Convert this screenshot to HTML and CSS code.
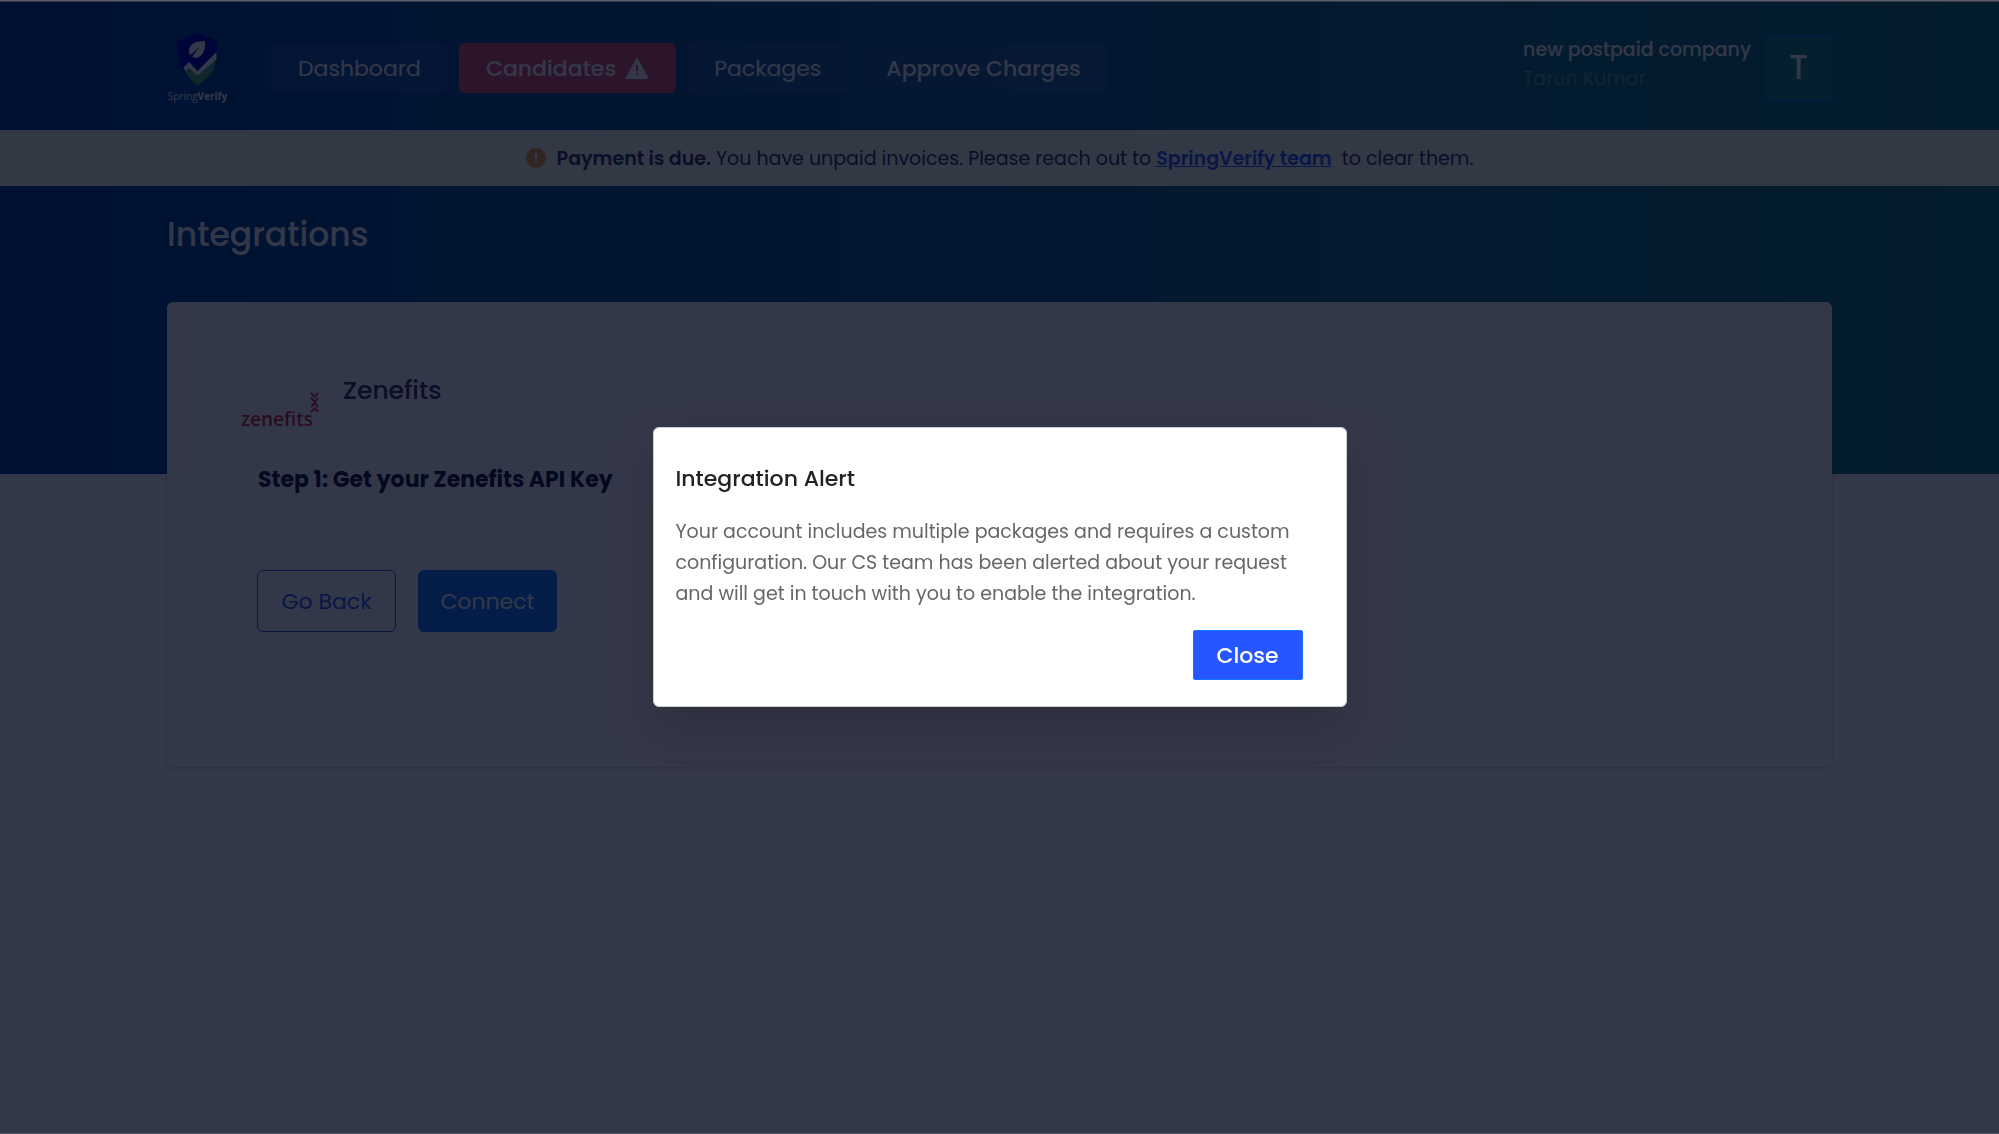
FILE: index.html
```html
<!DOCTYPE html>
<html lang="en">
<head>
  <meta charset="utf-8">
  <meta name="viewport" content="width=device-width, initial-scale=1">
  <title>Integrations - SpringVerify</title>
  <link rel="stylesheet" href="styles.css">
</head>
<body>
  <div class="page">
    <div class="hero">
      <header class="navbar">
        <a href="#" class="brand">
          <svg class="brand-mark" viewBox="0 0 41 52" aria-hidden="true">
            <path fill="#0000b4" d="M20.500 0L40.500 8L39 30Q37 40 20.500 52Q4 40 2 30L0 8Z"/>
            <path fill="#49a86a" d="M7 37L12 34L20.500 43L39 25Q38 34 36 38Q33 43 20.500 53Q12 46 7 37Z"/>
            <path fill="#fff" d="M6 35L12 29L20.500 38L39.500 19V26L20.500 43L12 35L9 38Z"/>
            <path fill="#fff" d="M28 8C17 8 12 12 12 18C12 20 12.500 21 13.500 22L22 14L15 24C23 27 29 20 28 8Z"/>
          </svg>
          <span class="brand-name">Spring<b>Verify</b></span>
        </a>
        <nav class="menu">
          <a href="#" class="menu-link">Dashboard</a>
          <a href="#" class="menu-link alert">Candidates
            <svg class="warning" viewBox="0 0 24 22" aria-hidden="true">
              <path fill="#fff" d="M12 0L24 22H0Z"/>
              <path fill="#dc4b69" d="M11 8H13V14H11ZM11 16H13V18H11Z"/>
            </svg>
          </a>
          <a href="#" class="menu-link">Packages</a>
          <a href="#" class="menu-link strong">Approve Charges</a>
        </nav>
        <div class="account">
          <div class="account-text">
            <div class="company">new postpaid company</div>
            <div class="person">Tarun Kumar</div>
          </div>
          <button type="button" class="avatar">T</button>
        </div>
      </header>

      <div class="notice">
        <svg class="notice-icon" viewBox="0 0 20 20" aria-hidden="true">
          <circle cx="10" cy="10" r="10" fill="#f2a03c"/>
          <path fill="#fff" d="M9 5H11V11H9ZM9 13H11V15H9Z"/>
        </svg>
        <p><b>Payment is due.</b> You have unpaid invoices. Please reach out to <a href="#">SpringVerify team</a>&nbsp; to clear them.</p>
      </div>

      <h1 class="title">Integrations</h1>
    </div>

    <main class="card">
      <div class="provider">
        <svg class="provider-logo" viewBox="0 0 78 48" aria-hidden="true">
          <text x="0" y="34" class="provider-word">zenefits</text>
          <path fill="none" stroke="#d8283c" stroke-width="2" d="M70 1L74 5L77 1M70 6L74 10L77 6M70 15L74 11L77 15M70 20L74 16L77 20"/>
        </svg>
        <h2>Zenefits</h2>
      </div>
      <h3 class="step">Step 1: Get your Zenefits API Key</h3>
      <div class="actions">
        <button type="button" class="btn outline">Go Back</button>
        <button type="button" class="btn">Connect</button>
      </div>
    </main>
  </div>

  <div class="overlay">
    <div class="modal" role="dialog" aria-modal="true" aria-labelledby="modal-title">
      <h2 id="modal-title">Integration Alert</h2>
      <p>Your account includes multiple packages and requires a custom configuration. Our CS team has been alerted about your request and will get in touch with you to enable the integration.</p>
      <button type="button" class="close">Close</button>
    </div>
  </div>
</body>
</html>
```
FILE: styles.css
```css
* {
  box-sizing: border-box;
}

body {
  margin: 0;
  background: #fff;
  font-family: Poppins, Inter, sans-serif;
  font-size: 19px;
  color: #32305a;
}

h1, h2, h3, p {
  margin: 0;
}

button {
  font-family: inherit;
  cursor: pointer;
}

.page {
  min-height: 100vh;
  border-top: 2px solid #fff;
}

/* header */
.hero {
  height: 472px;
  background: linear-gradient(to right, #003c96, #0f6487 60%, #147873);
}

.navbar {
  display: flex;
  align-items: center;
  height: 128px;
  padding: 4px 167px 0;
}

.brand {
  display: flex;
  flex-direction: column;
  align-items: center;
  gap: 4px;
  width: 61px;
  margin-right: 43px;
  color: #fff;
  text-decoration: none;
}

.brand-mark {
  width: 41px;
  height: 52px;
}

.brand-name {
  font-family: "Open Sans", sans-serif;
  font-size: 10px;
  line-height: 15px;
}

.menu {
  display: flex;
  gap: 11px;
}

.menu-link {
  display: flex;
  align-items: center;
  gap: 9px;
  height: 50px;
  padding: 0 27px;
  border-radius: 6px;
  background: rgba(60, 95, 180, 0.4);
  color: #fff;
  font-size: 22px;
  text-decoration: none;
}

.alert {
  background: #dc4b69;
  font-weight: 500;
}

.strong {
  font-weight: 500;
}

.warning {
  width: 24px;
  height: 22px;
}

.account {
  display: flex;
  align-items: center;
  gap: 14px;
  margin-left: auto;
}

.account-text {
  padding-bottom: 8px;
  line-height: 29px;
}

.company {
  color: #fff;
  font-weight: 500;
}

.person {
  color: #5a9ba5;
}

.avatar {
  width: 67px;
  height: 67px;
  border: 2px solid #0f6ec8;
  border-radius: 6px;
  background: #14827d;
  color: #fff;
  font-size: 33px;
  font-weight: 500;
}

.notice {
  display: flex;
  align-items: center;
  justify-content: center;
  gap: 11px;
  height: 56px;
  background: #fffff0;
}

.notice-icon {
  width: 20px;
  height: 20px;
}

.notice b, .notice a {
  font-weight: 600;
}

.notice a {
  color: #2b59ff;
}

.title {
  padding: 24px 167px;
  color: #fff;
  font-size: 33px;
  font-weight: 500;
  line-height: 50px;
}

/* card */
.card {
  min-height: 465px;
  margin: -172px 167px 0;
  padding: 71px 74px;
  border-radius: 6px;
  background: #fff;
  box-shadow: 0 1px 4px rgba(0, 0, 0, 0.2);
}

.provider {
  display: flex;
  gap: 24px;
  height: 56px;
}

.provider-logo {
  width: 78px;
  height: 48px;
  margin-top: 19px;
}

.provider-word {
  fill: #d8283c;
  font-family: "Open Sans", sans-serif;
  font-size: 19px;
  font-weight: 600;
}

.provider h2 {
  font-size: 25px;
  font-weight: 500;
  line-height: 36px;
}

.step {
  padding: 31px 17px 0;
  color: #0f1432;
  font-size: 22px;
  font-weight: 700;
  line-height: 40px;
}

.actions {
  display: flex;
  gap: 22px;
  padding: 70px 16px 0;
}

.btn {
  min-width: 139px;
  height: 62px;
  border: 1px solid #0f73ff;
  border-radius: 6px;
  background: #0f73ff;
  color: #fff;
  font-size: 22px;
}

.outline {
  border-color: #2b59ff;
  background: none;
  color: #2b59ff;
}

/* modal */
.overlay {
  position: fixed;
  inset: 0;
  display: flex;
  align-items: center;
  justify-content: center;
  border: 1px solid rgba(255, 255, 255, 0.2);
  border-width: 1px 0;
  background: rgba(0, 6, 26, 0.8);
}

.modal {
  display: flex;
  flex-direction: column;
  width: 694px;
  padding: 35px 43px 26px 22px;
  border: 1px solid #ccc;
  border-radius: 6px;
  background: #fff;
  box-shadow: 0 24px 48px rgba(38, 25, 40, 0.3);
}

.modal h2 {
  color: #222;
  font-size: 22px;
  font-weight: 500;
  line-height: 32px;
}

.modal p {
  margin: 21px 0;
  color: #666;
  line-height: 31px;
}

.close {
  align-self: flex-end;
  width: 110px;
  height: 50px;
  border: 1px solid #1478ff;
  border-radius: 2px;
  background: #2556ff;
  color: #fff;
  font-size: 22px;
  font-weight: 500;
}
```
